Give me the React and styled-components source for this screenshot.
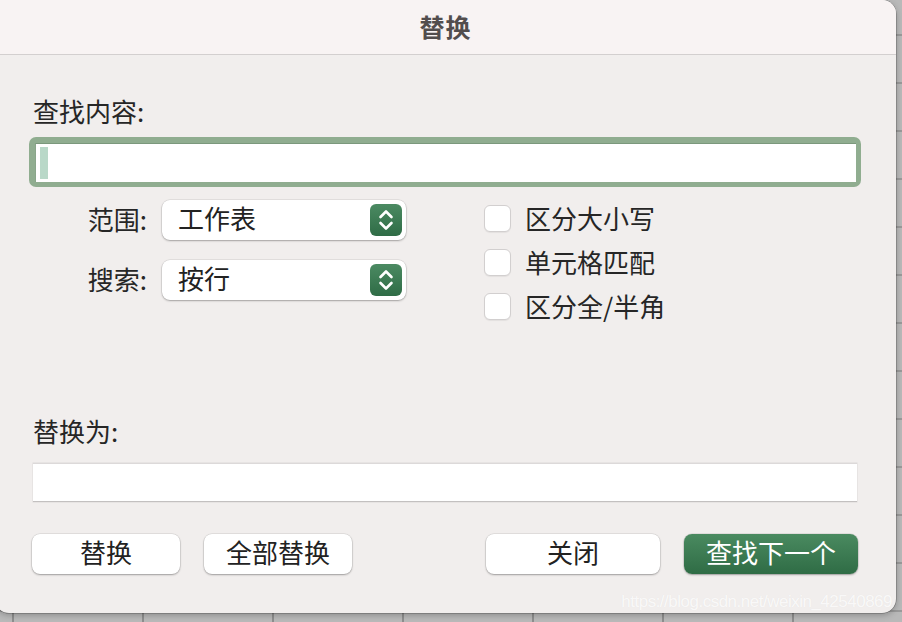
import React from 'react';
import styled, { createGlobalStyle } from 'styled-components';

const cjk = `"Noto Sans CJK SC", "Noto Sans", sans-serif`;

const GlobalStyle = createGlobalStyle`
  html, body {
    margin: 0;
    padding: 0;
    width: 902px;
    height: 622px;
    overflow: hidden;
  }
  body {
    font-family: ${cjk};
    background: #b9b9b9;
  }
`;

const Desktop = styled.div`
  width: 902px;
  height: 622px;
  background-color: #b9b9b9;
  background-image:
    linear-gradient(to right, #8e8e8e 0 2px, transparent 2px),
    linear-gradient(to bottom, #9a9a9a 0 2px, transparent 2px);
  background-size: 130px 100%, 100% 48px;
  background-position: 12px 0, 0 34px;
  overflow: hidden;
`;

const Dialog = styled.div`
  position: relative;
  width: 901px;
  height: 613px;
  margin-left: -5px;
  background: #f1eeed;
  border-radius: 0 14px 14px 14px;
  box-shadow: 0 0 0 0.5px rgba(0, 0, 0, 0.35), 0 2px 6px rgba(0, 0, 0, 0.25);
  display: flex;
  flex-direction: column;
  overflow: hidden;
`;

const TitleBar = styled.div`
  height: 55px;
  flex: none;
  background: #f8f3f3;
  border-bottom: 1px solid #d3cfcf;
  display: flex;
  align-items: center;
  justify-content: center;
  padding-bottom: 3px;
  box-sizing: border-box;
  font-size: 25px;
  font-weight: 700;
  color: #524d4d;
  letter-spacing: 1px;
`;

const Body = styled.div`
  flex: 1;
  display: flex;
  flex-direction: column;
  padding: 41px 35px 0 38px;
`;

const FieldLabel = styled.div`
  font-size: 26px;
  line-height: 30px;
  color: #262626;
  margin-top: ${p => p.$top || 0}px;
`;

const FocusRing = styled.div`
  margin: 11px 0 0 -4px;
  height: 50px;
  box-sizing: border-box;
  padding: 6px 5px 5px 6px;
  background: #90ad90;
  border-radius: 7px;
  display: flex;
`;

const FindInput = styled.div`
  flex: 1;
  background: #fff;
  border-top: 1px solid #7b987c;
  border-left: 1px solid #89a58a;
  display: flex;
  align-items: center;
  padding-left: 4px;
`;

const Caret = styled.div`
  width: 8px;
  height: 32px;
  background: #b9d8c8;
`;

const Options = styled.div`
  display: flex;
  margin-top: 13px;
  height: 200px;
`;

const SelectColumn = styled.div`
  display: flex;
  flex-direction: column;
  gap: 20px;
`;

const SelectRow = styled.div`
  display: flex;
  align-items: center;
  gap: 15px;
`;

const RowLabel = styled.div`
  width: 114px;
  text-align: right;
  font-size: 26px;
  color: #262626;
  line-height: 30px;
  padding-bottom: 3px;
`;

const Select = styled.div`
  width: 244px;
  height: 40px;
  box-sizing: border-box;
  background: #fff;
  border-radius: 8px;
  box-shadow: 0 0 0 0.5px rgba(0, 0, 0, 0.12), 0 1px 2px rgba(0, 0, 0, 0.28);
  display: flex;
  align-items: center;
  justify-content: space-between;
  padding: 0 4px 0 16px;
  font-size: 26px;
  color: #222;
`;

const SelectValue = styled.span`
  line-height: 30px;
  padding-bottom: 4px;
`;

const Stepper = styled.div`
  width: 32px;
  height: 32px;
  border-radius: 6px;
  background: linear-gradient(#4b8a62, #2f6c46);
  display: flex;
  align-items: center;
  justify-content: center;
`;

const CheckColumn = styled.div`
  display: flex;
  flex-direction: column;
  gap: 14px;
  margin-left: 78px;
  margin-top: 3px;
`;

const CheckRow = styled.label`
  display: flex;
  align-items: center;
  gap: 14px;
  height: 30px;
  font-size: 26px;
  color: #262626;
`;

const CheckText = styled.span`
  line-height: 30px;
  padding-bottom: 1px;
`;

const Box = styled.span`
  width: 27px;
  height: 27px;
  box-sizing: border-box;
  background: #fff;
  border: 1px solid #d2cfcf;
  border-radius: 6px;
  box-shadow: 0 1px 1px rgba(0, 0, 0, 0.06);
`;

const ReplaceInput = styled.div`
  margin-top: 17px;
  height: 39px;
  width: 824px;
  box-sizing: border-box;
  background: #fff;
  border-top: 1px solid #dcd9d9;
  border-bottom: 1px solid #c3c0c0;
  box-shadow: 0 0 0 0.5px rgba(0, 0, 0, 0.08);
`;

const ButtonBar = styled.div`
  display: flex;
  margin-top: 32px;
  margin-left: -1px;
`;

const Button = styled.div`
  width: ${p => p.$w}px;
  height: 40px;
  box-sizing: border-box;
  padding-bottom: 5px;
  margin-left: ${p => p.$ml || 0}px;
  border-radius: 8px;
  display: flex;
  align-items: center;
  justify-content: center;
  font-size: 26px;
  color: ${p => (p.$primary ? '#fff' : '#222')};
  background: ${p => (p.$primary ? 'linear-gradient(#4a8a60, #2f6c45)' : '#fff')};
  box-shadow: 0 0 0 0.5px rgba(0, 0, 0, 0.12), 0 1px 2px rgba(0, 0, 0, 0.3);
`;

const Watermark = styled.div`
  position: absolute;
  right: 4px;
  bottom: 1px;
  font-family: "Liberation Sans", Arial, sans-serif;
  font-size: 17px;
  letter-spacing: -0.5px;
  color: rgba(255, 255, 255, 0.8);
  text-shadow: 0 0 1px rgba(0, 0, 0, 0.06);
`;

const StepperIcon = () => (
  <svg width="32" height="32" viewBox="0 0 32 32" fill="none">
    <path d="M10.5 13 L16 7.5 L21.5 13" stroke="#fff" strokeWidth="2.6" strokeLinecap="round" strokeLinejoin="round" />
    <path d="M10.5 19 L16 24.5 L21.5 19" stroke="#fff" strokeWidth="2.6" strokeLinecap="round" strokeLinejoin="round" />
  </svg>
);

const selects = [
  { label: '范围:', value: '工作表' },
  { label: '搜索:', value: '按行' },
];

const checks = ['区分大小写', '单元格匹配', '区分全/半角'];

export default function App() {
  return (
    <Desktop>
      <GlobalStyle />
      <Dialog>
        <TitleBar>替换</TitleBar>
        <Body>
          <FieldLabel>查找内容:</FieldLabel>
          <FocusRing>
            <FindInput>
              <Caret />
            </FindInput>
          </FocusRing>
          <Options>
            <SelectColumn>
              {selects.map(s => (
                <SelectRow key={s.label}>
                  <RowLabel>{s.label}</RowLabel>
                  <Select>
                    <SelectValue>{s.value}</SelectValue>
                    <Stepper>
                      <StepperIcon />
                    </Stepper>
                  </Select>
                </SelectRow>
              ))}
            </SelectColumn>
            <CheckColumn>
              {checks.map(c => (
                <CheckRow key={c}>
                  <Box />
                  <CheckText>{c}</CheckText>
                </CheckRow>
              ))}
            </CheckColumn>
          </Options>
          <FieldLabel $top={16}>替换为:</FieldLabel>
          <ReplaceInput />
          <ButtonBar>
            <Button $w={148}>替换</Button>
            <Button $w={148} $ml={24}>全部替换</Button>
            <Button $w={174} $ml={134}>关闭</Button>
            <Button $w={174} $ml={24} $primary>查找下一个</Button>
          </ButtonBar>
        </Body>
        <Watermark>https://blog.csdn.net/weixin_42540869</Watermark>
      </Dialog>
    </Desktop>
  );
}
